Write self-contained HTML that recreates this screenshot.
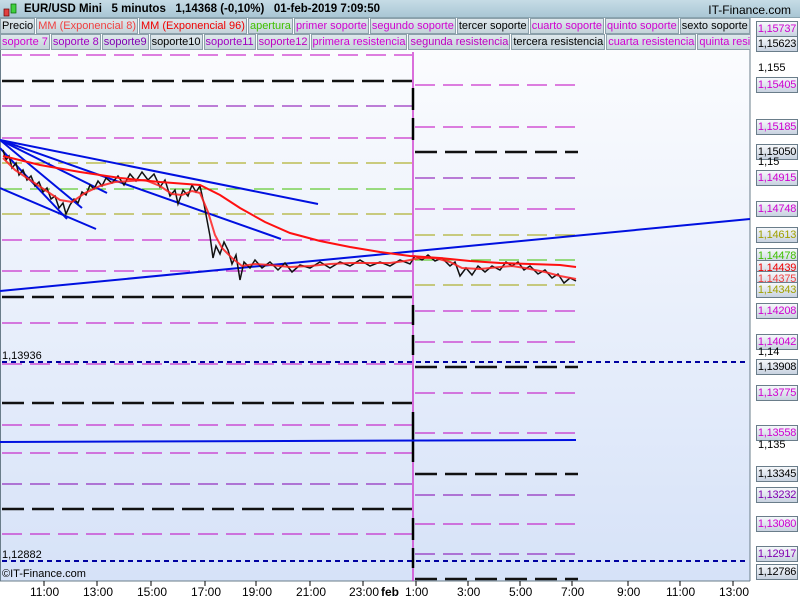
<!DOCTYPE html>
<html><head><meta charset="utf-8"><style>
*{margin:0;padding:0;box-sizing:border-box}
body{width:800px;height:600px;overflow:hidden;background:#fff;font-family:"Liberation Sans",sans-serif;position:relative}
#hdr{position:absolute;left:0;top:0;width:800px;height:18px;background:linear-gradient(#c6dce6,#a9c6d4);border-bottom:1px solid #8aa4b0;font-size:11.5px;font-weight:bold;line-height:18px}
.row{position:absolute;left:0;height:16px;display:flex;font-size:11px;line-height:14px;white-space:nowrap}
.row span{background:linear-gradient(#dfe8ec,#c4d3da);border:1px solid #8ca0aa;padding:0 1px;margin-right:1px;height:16px}
.ax{position:absolute;left:756px;width:42px;height:16px;border:1px solid #6a7d8a;background:linear-gradient(#f6f8fb,#c8d2e0);font-size:11px;line-height:14px;text-align:center;letter-spacing:-0.2px;white-space:nowrap}
.pl{position:absolute;left:758px;font-size:11px;line-height:12px}
.xl{position:absolute;top:585px;font-size:12px}
</style></head><body>
<svg style="position:absolute;left:0;top:0" width="800" height="600">
<defs><linearGradient id="bg" x1="0" y1="0" x2="0" y2="1"><stop offset="0" stop-color="#fbfcfe"/><stop offset="1" stop-color="#d6e2f8"/></linearGradient></defs>
<rect x="0" y="50" width="750" height="531" fill="url(#bg)"/>
<rect x="0" y="581" width="800" height="19" fill="#fff"/>
<rect x="750" y="18" width="50" height="563" fill="#fff"/>
<line x1="750" y1="18" x2="750" y2="581" stroke="#6a7d8a"/>
<line x1="0" y1="581" x2="750" y2="581" stroke="#6a7d8a"/>
<line x1="0.5" y1="50" x2="0.5" y2="581" stroke="#6a7d8a"/>
<g fill="none">
<g stroke-dasharray="20 8" stroke-width="1">
<line x1="2" y1="55" x2="412" y2="55" stroke="#c000c0"/>
<line x1="2" y1="106" x2="412" y2="106" stroke="#8000b0"/>
<line x1="2" y1="138" x2="412" y2="138" stroke="#c000c0"/>
<line x1="2" y1="163" x2="412" y2="163" stroke="#a0a000"/>
<line x1="2" y1="189" x2="412" y2="189" stroke="#40c000"/>
<line x1="2" y1="214" x2="412" y2="214" stroke="#a0a000"/>
<line x1="2" y1="240" x2="412" y2="240" stroke="#c000c0"/>
<line x1="2" y1="271" x2="412" y2="271" stroke="#c000c0"/>
<line x1="2" y1="323" x2="412" y2="323" stroke="#c000c0"/>
<line x1="2" y1="364" x2="412" y2="364" stroke="#c000c0"/>
<line x1="2" y1="425" x2="412" y2="425" stroke="#c000c0"/>
<line x1="2" y1="453" x2="412" y2="453" stroke="#c000c0"/>
<line x1="2" y1="484" x2="412" y2="484" stroke="#8000b0"/>
<line x1="2" y1="534" x2="412" y2="534" stroke="#c000c0"/>
</g>
<g stroke-dasharray="22 8" stroke-width="2.5" stroke="#111">
<line x1="2" y1="81" x2="412" y2="81"/>
<line x1="2" y1="297" x2="412" y2="297"/>
<line x1="2" y1="403" x2="412" y2="403"/>
<line x1="2" y1="509" x2="412" y2="509"/>
</g>
<g stroke-dasharray="20 8" stroke-width="1">
<line x1="415" y1="85" x2="578" y2="85" stroke="#c000c0"/>
<line x1="415" y1="127" x2="578" y2="127" stroke="#c000c0"/>
<line x1="415" y1="178" x2="578" y2="178" stroke="#8000b0"/>
<line x1="415" y1="209" x2="578" y2="209" stroke="#c000c0"/>
<line x1="415" y1="235" x2="578" y2="235" stroke="#a0a000"/>
<line x1="415" y1="260" x2="578" y2="260" stroke="#40c000"/>
<line x1="415" y1="285" x2="578" y2="285" stroke="#a0a000"/>
<line x1="415" y1="311" x2="578" y2="311" stroke="#c000c0"/>
<line x1="415" y1="342" x2="578" y2="342" stroke="#c000c0"/>
<line x1="415" y1="393" x2="578" y2="393" stroke="#c000c0"/>
<line x1="415" y1="433" x2="578" y2="433" stroke="#c000c0"/>
<line x1="415" y1="495" x2="578" y2="495" stroke="#8000b0"/>
<line x1="415" y1="524" x2="578" y2="524" stroke="#c000c0"/>
<line x1="415" y1="554" x2="578" y2="554" stroke="#8000b0"/>
</g>
<g stroke-dasharray="22 8" stroke-width="2.5" stroke="#111">
<line x1="415" y1="152" x2="578" y2="152"/>
<line x1="415" y1="367" x2="578" y2="367"/>
<line x1="415" y1="474" x2="578" y2="474"/>
<line x1="415" y1="579" x2="578" y2="579"/>
</g>
<g stroke="#0000a0" stroke-width="2" stroke-dasharray="5 4">
<line x1="2" y1="362" x2="748" y2="362"/>
<line x1="2" y1="561" x2="748" y2="561"/>
</g>
<line x1="413" y1="52" x2="413" y2="581" stroke="#d040d0" stroke-width="1.5"/>
<g stroke="#000" stroke-width="2.5">
<line x1="413" y1="88" x2="413" y2="110"/><line x1="413" y1="118" x2="413" y2="140"/>
<line x1="413" y1="305" x2="413" y2="325"/><line x1="413" y1="335" x2="413" y2="355"/>
<line x1="413" y1="412" x2="413" y2="440"/><line x1="413" y1="440" x2="413" y2="462"/>
<line x1="413" y1="518" x2="413" y2="540"/><line x1="413" y1="548" x2="413" y2="568"/>
</g>
<g stroke="#0010e0" stroke-width="2">
<line x1="0" y1="291" x2="750" y2="219"/>
<line x1="0" y1="442" x2="576" y2="440"/>
<line x1="0" y1="140" x2="318" y2="204"/>
<line x1="0" y1="140" x2="281" y2="239"/>
<line x1="0" y1="140" x2="107" y2="193"/>
<line x1="0" y1="140" x2="82" y2="208"/>
<line x1="0" y1="188" x2="96" y2="229"/>
<line x1="0" y1="148" x2="67" y2="219"/>
</g>
<polyline stroke="#111" stroke-width="1.5" points="3,150 6,160 9,156 12,168 16,163 19,175 23,170 27,180 31,176 35,186 39,182 43,192 47,188 51,199 55,196 59,208 63,203 66,214 70,205 74,199 78,203 82,192 86,195 90,185 94,189 98,181 102,186 106,178 112,183 118,176 124,185 130,174 136,181 142,172 148,180 154,174 160,187 165,180 170,196 175,190 178,204 183,190 188,196 192,185 196,192 200,186 204,204 207,220 210,236 213,258 216,246 220,254 224,242 228,250 232,264 236,255 240,280 244,262 250,268 255,260 262,268 270,262 278,270 285,263 292,272 300,265 310,268 320,262 330,268 340,262 350,266 360,260 370,266 380,262 390,266 400,260 410,264 415,256 422,260 428,255 435,261 442,258 450,266 455,262 460,276 466,268 472,275 478,266 485,272 492,266 500,270 506,262 512,266 518,262 524,270 530,266 538,274 545,270 552,278 558,274 564,283 570,278 576,281"/>
<polyline stroke="#ff2020" stroke-width="2" opacity="0.85" points="3,158 15,170 30,180 45,190 60,200 72,202 85,193 100,186 115,182 130,181 145,180 160,186 172,194 182,195 192,191 200,193 208,212 215,235 222,248 232,258 242,266 255,264 270,265 290,267 310,266 330,264 350,263 370,263 390,263 405,261 420,258 435,258 450,262 462,268 480,269 500,267 512,266 525,268 545,272 560,276 576,279"/>
<polyline stroke="#ff1010" stroke-width="2" points="3,156 40,165 80,172 120,178 160,182 200,185 220,195 240,208 265,222 290,233 320,241 350,247 380,252 410,256 440,258 470,261 500,263 530,264 560,265 576,267"/>
</g>
<g stroke="#000"><line x1="44" y1="581" x2="44" y2="586"/><line x1="97" y1="581" x2="97" y2="586"/><line x1="151" y1="581" x2="151" y2="586"/><line x1="205" y1="581" x2="205" y2="586"/><line x1="256" y1="581" x2="256" y2="586"/><line x1="310" y1="581" x2="310" y2="586"/><line x1="363" y1="581" x2="363" y2="586"/><line x1="416" y1="581" x2="416" y2="586"/><line x1="468" y1="581" x2="468" y2="586"/><line x1="520" y1="581" x2="520" y2="586"/><line x1="572" y1="581" x2="572" y2="586"/><line x1="628" y1="581" x2="628" y2="586"/><line x1="680" y1="581" x2="680" y2="586"/><line x1="733" y1="581" x2="733" y2="586"/></g>
</svg>
<div id="hdr"><span style="position:absolute;left:24px">EUR/USD Mini &nbsp;&nbsp;5 minutos &nbsp;&nbsp;1,14368 (-0,10%) &nbsp;&nbsp;01-feb-2019 7:09:50</span><span style="position:absolute;right:9px;top:1px;font-weight:normal;font-size:12px">IT-Finance.com</span>
<svg style="position:absolute;left:0;top:0" width="20" height="18"><rect x="4" y="9" width="5" height="7" fill="#e04040" stroke="#600" stroke-width="0.7"/><rect x="11" y="4" width="5" height="9" fill="#40d040" stroke="#060" stroke-width="0.7"/></svg></div>
<div class="row" style="top:18px"><span>Precio</span><span style="color:#f04040">MM (Exponencial 8)</span><span style="color:#f00000">MM (Exponencial 96)</span><span style="color:#40c000">apertura</span><span style="color:#d000d0">primer soporte</span><span style="color:#d000d0">segundo soporte</span><span>tercer soporte</span><span style="color:#d000d0">cuarto soporte</span><span style="color:#d000d0">quinto soporte</span><span>sexto soporte</span></div>
<div class="row" style="top:34px;width:750px;overflow:hidden"><span style="color:#d000d0">soporte 7</span><span style="color:#a000c0">soporte 8</span><span style="color:#8000b0">soporte9</span><span>soporte10</span><span style="color:#a000c0">soporte11</span><span style="color:#c000c0">soporte12</span><span style="color:#d000d0">primera resistencia</span><span style="color:#c000c0">segunda resistencia</span><span>tercera resistencia</span><span style="color:#d000d0">cuarta resistencia</span><span style="color:#d000d0">quinta resistencia</span></div>
<div class="ax" style="top:21px;color:#d000d0">1,15737</div>
<div class="ax" style="top:36px">1,15623</div>
<div class="pl" style="top:62px">1,155</div>
<div class="ax" style="top:77px;color:#d000d0">1,15405</div>
<div class="ax" style="top:119px;color:#d000d0">1,15185</div>
<div class="ax" style="top:144px">1,15050</div>
<div class="pl" style="top:156px">1,15</div>
<div class="ax" style="top:170px;color:#d000d0">1,14915</div>
<div class="ax" style="top:201px;color:#d000d0">1,14748</div>
<div class="ax" style="top:227px;color:#a0a000">1,14613</div>
<div class="ax" style="top:248px;color:#40c000">1,14478</div>
<div class="ax" style="top:260px;color:#f00000">1,14439</div>
<div class="ax" style="top:271px;color:#f04040">1,14375</div>
<div class="ax" style="top:282px;color:#a0a000">1,14343</div>
<div class="ax" style="top:303px;color:#d000d0">1,14208</div>
<div class="ax" style="top:334px;color:#d000d0">1,14042</div>
<div class="pl" style="top:346px">1,14</div>
<div class="ax" style="top:359px">1,13908</div>
<div class="ax" style="top:385px;color:#d000d0">1,13775</div>
<div class="ax" style="top:425px;color:#d000d0">1,13558</div>
<div class="pl" style="top:439px">1,135</div>
<div class="ax" style="top:466px">1,13345</div>
<div class="ax" style="top:487px;color:#8000b0">1,13232</div>
<div class="ax" style="top:516px;color:#d000d0">1,13080</div>
<div class="ax" style="top:546px;color:#8000b0">1,12917</div>
<div class="ax" style="top:564px">1,12786</div>
<div style="position:absolute;left:2px;top:350px;font-size:11px">1,13936</div>
<div style="position:absolute;left:2px;top:549px;font-size:11px">1,12882</div>
<div style="position:absolute;left:2px;top:568px;font-size:11px">©IT-Finance.com</div>
<div class="xl" style="left:30px">11:00</div><div class="xl" style="left:83px">13:00</div><div class="xl" style="left:137px">15:00</div><div class="xl" style="left:191px">17:00</div><div class="xl" style="left:242px">19:00</div><div class="xl" style="left:296px">21:00</div><div class="xl" style="left:349px">23:00</div><div class="xl" style="left:381px;font-weight:bold">feb</div><div class="xl" style="left:405px">1:00</div><div class="xl" style="left:457px">3:00</div><div class="xl" style="left:509px">5:00</div><div class="xl" style="left:561px">7:00</div><div class="xl" style="left:617px">9:00</div><div class="xl" style="left:666px">11:00</div><div class="xl" style="left:719px">13:00</div>
</body></html>
